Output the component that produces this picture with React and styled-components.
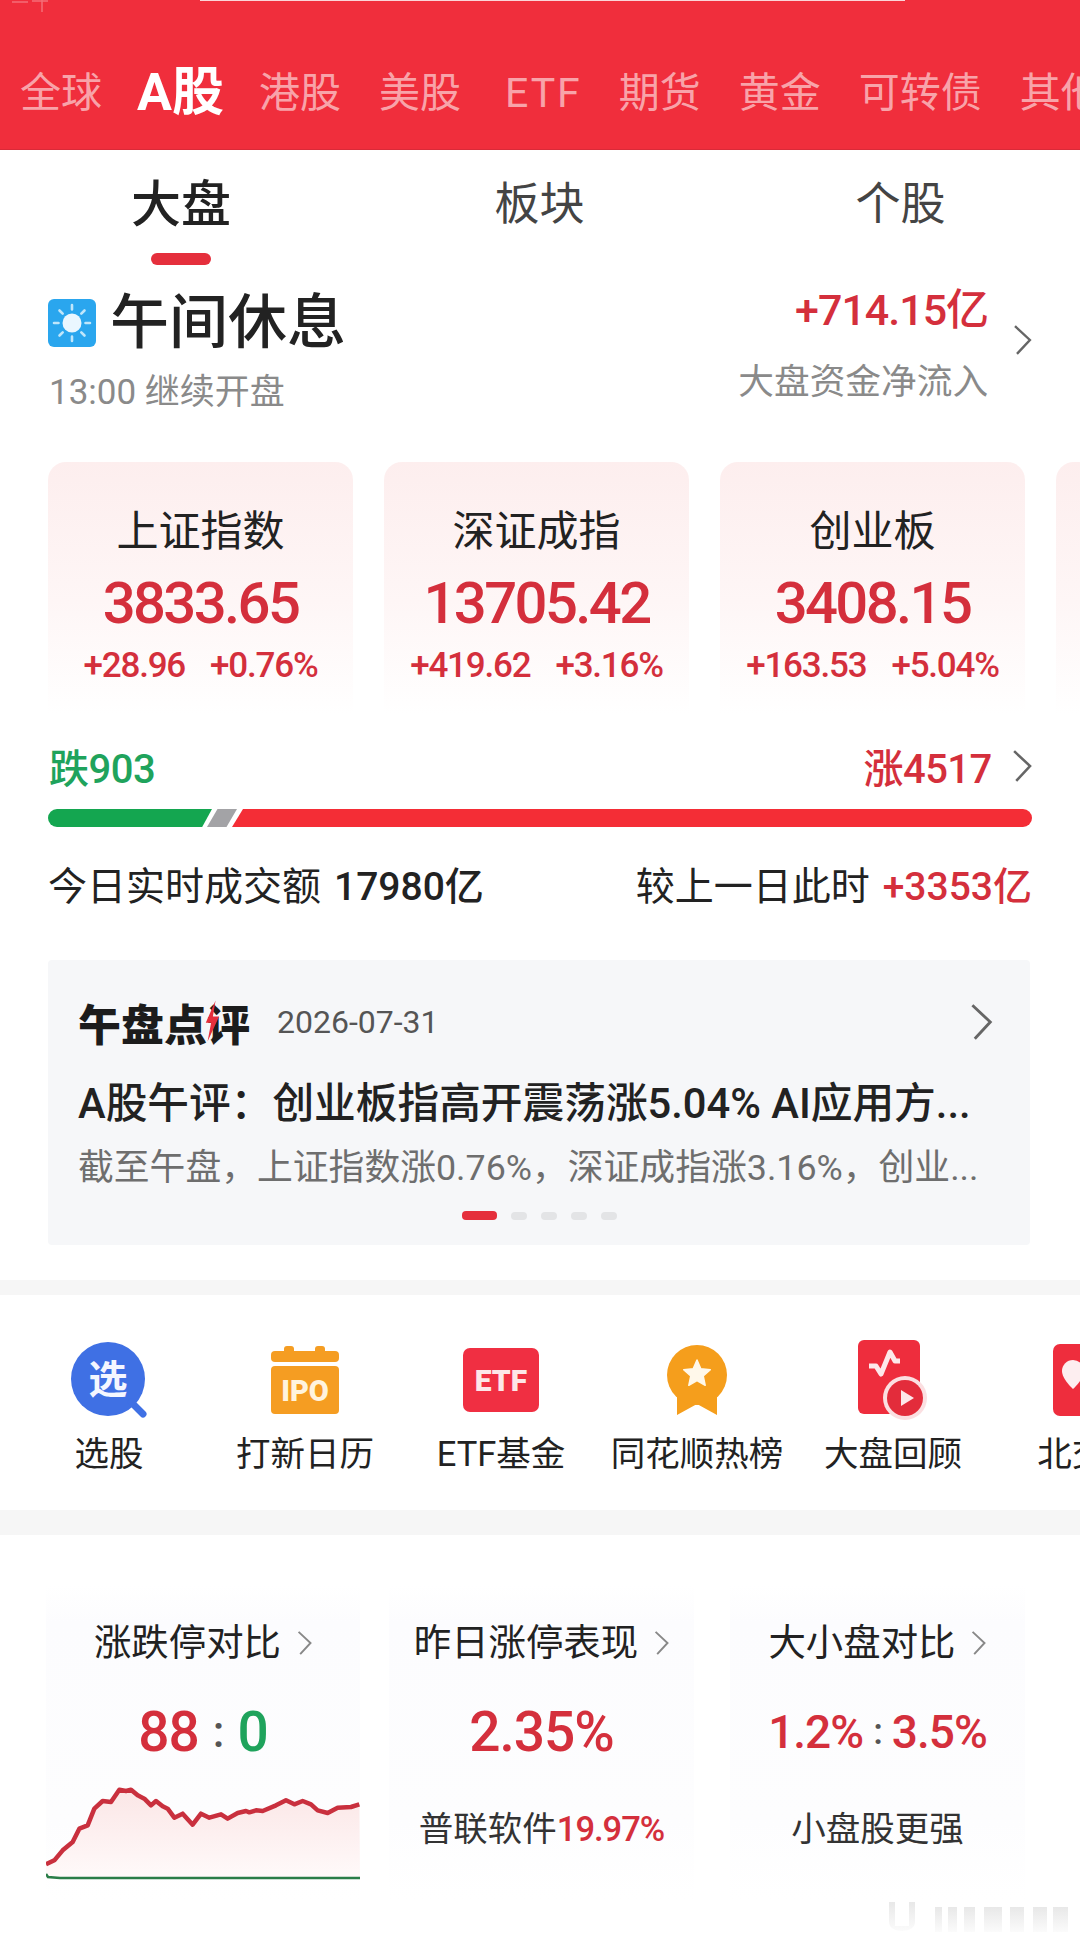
import React from 'react';
import styled, { createGlobalStyle } from 'styled-components';

const GlobalStyle = createGlobalStyle`
  html, body { margin: 0; padding: 0; background: #fff; }
  body { font-family: Roboto, "Noto Sans CJK SC", sans-serif; color: #222; }
`;

const RED = '#d42f3c';
const GREEN = '#1fa35c';

const Page = styled.div`
  width: 1080px;
  height: 1944px;
  overflow: hidden;
  display: flex;
  flex-direction: column;
  background: #fff;
`;

const Header = styled.header`
  height: 150px;
  flex: none;
  background: #f02e3c;
  border-bottom: 1px solid #d92a38;
  box-sizing: border-box;
  position: relative;
  display: flex;
  align-items: flex-end;
`;
const TopLine = styled.div`
  position: absolute;
  top: 0;
  left: 200px;
  width: 705px;
  height: 1px;
  background: #fbd5d8;
`;
const StatusGlyph = styled.svg`
  position: absolute;
  top: 0;
  left: 10px;
`;
const MarketTabs = styled.nav`
  display: flex;
  align-items: center;
  gap: 38px;
  padding: 0 0 26px 20px;
  white-space: nowrap;
  height: 60px;
`;
const MarketTab = styled.span`
  font-size: ${p => (p.$active ? '52px' : '41px')};
  font-weight: ${p => (p.$active ? 700 : 400)};
  color: ${p => (p.$active ? '#fff' : 'rgba(255,255,255,.58)')};
  line-height: 60px;
  letter-spacing: ${p => (p.$latin ? '2px' : '0')};
  margin: ${p => (p.$latin ? '0 -1px 0 6px' : p.$active ? '0 -3px' : '0')};
`;

const SubTabs = styled.div`
  flex: none;
  height: 115px;
  display: grid;
  grid-template-columns: 362px 355px 367px;
`;
const SubTab = styled.div`
  display: flex;
  flex-direction: column;
  align-items: center;
  padding-top: 28px;
  font-size: ${p => (p.$active ? '50px' : '45px')};
  font-weight: ${p => (p.$active ? 500 : 400)};
  line-height: 54px;
  color: ${p => (p.$active ? '#222' : '#444')};
`;
const SubTabMark = styled.i`
  width: 60px;
  height: 12px;
  margin-top: 21px;
  border-radius: 6px;
  background: #e52f3c;
`;

const Status = styled.section`
  flex: none;
  height: 197px;
  box-sizing: border-box;
  padding: 28px 48px 0;
  display: flex;
  justify-content: space-between;
`;
const StatusLeft = styled.div`
  display: flex;
  flex-direction: column;
`;
const StatusTitle = styled.div`
  display: flex;
  align-items: center;
  gap: 14px;
  margin-top: -2px;
  font-size: 59px;
  font-weight: 500;
  line-height: 64px;
  color: #222;
`;
const StatusSub = styled.div`
  font-size: 35px;
  line-height: 44px;
  margin-top: 16px;
  padding-left: 1px;
  color: #8a8a8a;
`;
const StatusRight = styled.div`
  display: flex;
  align-items: flex-start;
  gap: 25px;
`;
const Flow = styled.div`
  display: flex;
  flex-direction: column;
  align-items: flex-end;
  gap: 31px;
  margin-top: -4px;
`;
const FlowValue = styled.div`
  font-size: 43px;
  line-height: 42px;
  font-weight: 500;
  color: ${RED};
  letter-spacing: -1px;
`;
const FlowLabel = styled.div`
  font-size: 35.7px;
  line-height: 40px;
  color: #8a8a8a;
`;
const FlowArrow = styled.div`
  margin-top: 32px;
`;

const Chevron = ({ size = 30, color = '#666' }) => (
  <svg width={size * 0.63} height={size} viewBox="0 0 19 30" fill="none" style={{ flex: 'none' }}>
    <path d="M2 1 L17 15 L4 29" stroke={color} strokeWidth="2.4" fill="none" />
  </svg>
);

const IndexRow = styled.div`
  flex: none;
  display: flex;
  gap: 31px;
  padding-left: 48px;
  height: 253px;
`;
const IndexCard = styled.div`
  flex: none;
  width: 305px;
  border-radius: 18px 18px 0 0;
  background: linear-gradient(180deg, #fdeeee 0%, #fef6f6 55%, #fff 100%);
  display: flex;
  flex-direction: column;
  align-items: center;
  padding-top: 46px;
  box-sizing: border-box;
`;
const IndexName = styled.div`
  font-size: 42px;
  line-height: 48px;
  color: #222;
`;
const IndexValue = styled.div`
  font-size: 58px;
  line-height: 70px;
  margin-top: 12px;
  font-weight: 500;
  color: ${RED};
  letter-spacing: -2.6px;
`;
const IndexChange = styled.div`
  display: flex;
  gap: 25px;
  font-size: 35px;
  font-weight: 500;
  line-height: 38px;
  margin-top: 9px;
  color: ${RED};
  letter-spacing: -1.2px;
`;

const Breadth = styled.div`
  flex: none;
  margin-top: 30px;
  padding: 0 48px;
  height: 42px;
  display: flex;
  align-items: center;
  justify-content: space-between;
  font-size: 40px;
  font-weight: 500;
  letter-spacing: -0.5px;
`;
const Fall = styled.span`
  color: ${GREEN};
  padding-left: 1px;
`;
const Rise = styled.span`
  display: flex;
  align-items: center;
  gap: 20px;
  color: ${RED};
`;
const Bar = styled.div`
  flex: none;
  margin: 22px 48px 0;
  height: 18px;
  display: flex;
  border-radius: 9px;
  overflow: hidden;
`;
const BarPart = styled.i`
  display: block;
  height: 100%;
  background: ${p => p.$color};
  clip-path: ${p => p.$clip};
  flex: ${p => p.$flex};
  margin-left: ${p => p.$ml || 0};
`;
const Turnover = styled.div`
  flex: none;
  margin-top: 33px;
  padding: 0 48px;
  height: 46px;
  display: flex;
  align-items: center;
  justify-content: space-between;
  font-size: 39px;
  color: #222;
`;
const TurnoverPart = styled.span`
  display: flex;
  align-items: center;
  gap: 13px;
`;
const TurnoverNum = styled.span`
  font-weight: 500;
  font-size: 39px;
  color: ${p => (p.$red ? RED : '#222')};
`;

const Review = styled.section`
  flex: none;
  margin: 54px 50px 0 48px;
  height: 285px;
  box-sizing: border-box;
  background: #f6f7f9;
  border-radius: 4px;
  padding: 37px 37px 0 30px;
  display: flex;
  flex-direction: column;
`;
const ReviewHead = styled.div`
  display: flex;
  align-items: center;
  height: 50px;
`;
const ReviewLogo = styled.span`
  font-size: 43px;
  font-weight: 900;
  color: #1c1c1c;
  letter-spacing: 0;
  position: relative;
`;
const Bolt = styled.svg`
  position: absolute;
  right: 30px;
  top: 8px;
`;
const ReviewDate = styled.span`
  font-size: 32px;
  color: #555;
  margin-left: 27px;
  flex: 1;
`;
const ReviewTitle = styled.div`
  margin-top: 33px;
  font-size: 41.7px;
  line-height: 48px;
  font-weight: 500;
  color: #222;
  white-space: nowrap;
`;
const ReviewText = styled.div`
  margin-top: 17px;
  font-size: 35.8px;
  line-height: 46px;
  color: #6e6e6e;
  white-space: nowrap;
`;
const Dots = styled.div`
  display: flex;
  justify-content: center;
  align-items: center;
  gap: 14px;
  margin-top: 20px;
  padding-left: 8px;
`;
const Dot = styled.i`
  width: ${p => (p.$active ? '35px' : '16px')};
  height: ${p => (p.$active ? '9px' : '8px')};
  border-radius: 4px;
  background: ${p => (p.$active ? '#e52f3c' : '#e3e4e6')};
`;

const Band = styled.div`
  flex: none;
  height: ${p => p.$h}px;
  margin-top: ${p => p.$mt || 0}px;
  background: #f6f6f6;
`;
const Rounded = styled.section`
  flex: none;
  position: relative;
  background: #fff;
  overflow: hidden;
  height: ${p => p.$h}px;
`;
const Shortcuts = styled.div`
  display: flex;
  height: 100%;
  box-sizing: border-box;
  padding: 45px 0 0 11px;
  white-space: nowrap;
`;
const Shortcut = styled.div`
  flex: none;
  width: 196px;
  display: flex;
  flex-direction: column;
  align-items: center;
  font-size: 34.5px;
  line-height: 42px;
  color: #222;
`;
const ShortcutIcon = styled.div`
  height: 80px;
  display: flex;
  align-items: center;
  justify-content: center;
  margin-bottom: 13px;
`;

const Tiles = styled.div`
  display: flex;
  padding: 50px 0 0 46px;
`;
const Tile = styled.div`
  flex: none;
  width: ${p => p.$w}px;
  margin-right: ${p => p.$mr}px;
  height: 315px;
  display: flex;
  flex-direction: column;
  align-items: center;
  background: linear-gradient(180deg, #fff, #fcfcfe 12%, #fdfdfe 75%, #fff);
  padding-top: 38px;
  box-sizing: border-box;
`;
const TileHead = styled.div`
  display: flex;
  align-items: center;
  gap: 16px;
  font-size: 37.4px;
  line-height: 40px;
  color: #222;
`;
const TileValue = styled.div`
  font-size: ${p => p.$size || 55}px;
  line-height: 60px;
  margin-top: 39px;
  font-weight: 500;
  color: ${RED};
  display: flex;
  gap: ${p => p.$gap || 0}px;
  align-items: center;
  letter-spacing: -1px;
`;
const Colon = styled.span`
  color: #555;
  font-size: 0.8em;
`;
const Zero = styled.span`
  color: ${GREEN};
`;
const TileNote = styled.div`
  margin-top: 47px;
  font-size: 34.5px;
  line-height: 40px;
  color: #333;
`;
const NoteRed = styled.span`
  color: ${RED};
  font-weight: 500;
  letter-spacing: -1px;
`;
const ChartSvg = styled.svg`
  margin-top: 25px;
  align-self: flex-start;
`;
const Watermark = styled.svg`
  position: absolute;
  right: 10px;
  bottom: 12px;
`;

const markets = ['全球', 'A股', '港股', '美股', 'ETF', '期货', '黄金', '可转债', '其他'];

const indexes = [
  { name: '上证指数', value: '3833.65', diff: '+28.96', pct: '+0.76%' },
  { name: '深证成指', value: '13705.42', diff: '+419.62', pct: '+3.16%' },
  { name: '创业板', value: '3408.15', diff: '+163.53', pct: '+5.04%' },
  { name: '', value: '', diff: '', pct: '' },
];

const SunIcon = () => (
  <svg width="48" height="48" viewBox="0 0 48 48">
    <rect width="48" height="48" rx="6" fill="#2aa6ee" />
    <circle cx="24" cy="24" r="9.500" fill="#eaf7ff" />
    <g stroke="#bfe6fb" strokeWidth="2.6" strokeLinecap="round">
      <path d="M24 6v4.500M24 37.500V42M6 24h4.500M37.500 24H42M11.500 11.500l3.200 3.200M33.300 33.300l3.200 3.200M11.500 36.500l3.200-3.200M33.300 14.700l3.200-3.200" />
    </g>
  </svg>
);

const PickIcon = () => (
  <svg width="76" height="76" viewBox="0 0 76 76">
    <circle cx="37" cy="37" r="37" fill="#3f70e4" />
    <path d="M60 60l12 12" stroke="#3f70e4" strokeWidth="7" strokeLinecap="round" />
    <text x="37" y="51" fontSize="39" fontWeight="700" fill="#f4f7ff" textAnchor="middle" fontFamily="Noto Sans CJK SC">选</text>
  </svg>
);

const IpoIcon = () => (
  <svg width="68" height="68" viewBox="0 0 68 68">
    <rect x="13" y="0" width="10" height="10" rx="3" fill="#f59d22" />
    <rect x="44" y="0" width="10" height="10" rx="3" fill="#f59d22" />
    <rect x="0" y="5" width="68" height="11" rx="4" fill="#f59d22" />
    <rect x="0" y="20" width="68" height="48" rx="4" fill="#f59d22" />
    <text x="34" y="55" fontSize="29" fontWeight="900" fill="#fff3dd" textAnchor="middle" fontFamily="Roboto">IPO</text>
  </svg>
);

const EtfIcon = () => (
  <svg width="76" height="64" viewBox="0 0 76 64">
    <rect width="76" height="64" rx="7" fill="#f02f42" />
    <text x="38" y="43" fontSize="30" fontWeight="900" fill="#fde6e8" textAnchor="middle" fontFamily="Roboto">ETF</text>
  </svg>
);

const MedalIcon = () => (
  <svg width="62" height="72" viewBox="0 0 62 72">
    <path d="M11 44L11 71L31 60L51 71L51 44Z" fill="#f59e1c" />
    <circle cx="31" cy="31" r="30" fill="#f59e1c" />
    <path
      d="M31 16L34.800 24.700L44.300 25.700L37.200 32L39.200 41.300L31 36.500L22.800 41.300L24.800 32L17.700 25.700L27.200 24.700Z"
      fill="#fff8ea"
      stroke="#fff8ea"
      strokeWidth="1.500"
      strokeLinejoin="round"
    />
  </svg>
);

const ReplayIcon = () => (
  <svg width="70" height="81" viewBox="0 0 70 81">
    <rect x="0" y="0" width="62" height="74" rx="6" fill="#ee2d3d" />
    <path d="M11 26h7l5 8 9-22 5 9h5" fill="none" stroke="#fde8ea" strokeWidth="5" strokeLinejoin="round" />
    <circle cx="47" cy="58" r="22" fill="#fbdfe1" />
    <circle cx="47" cy="58" r="18" fill="#e32c3b" />
    <path d="M43 50l13 8-13 8z" fill="#fde8ea" />
  </svg>
);

const BeijingIcon = () => (
  <svg width="72" height="72" viewBox="0 0 72 72">
    <rect width="72" height="72" rx="7" fill="#ee2d3d" />
    <path d="M9 27a11 11 0 1 1 22 0c0 8-11 18-11 18S9 35 9 27z" fill="#fdeef0" />
  </svg>
);

const shortcuts = [
  { label: '选股', icon: <PickIcon /> },
  { label: '打新日历', icon: <IpoIcon /> },
  { label: 'ETF基金', icon: <EtfIcon /> },
  { label: '同花顺热榜', icon: <MedalIcon /> },
  { label: '大盘回顾', icon: <ReplayIcon /> },
  { label: '北交所', icon: <BeijingIcon /> },
];

const redLine = [[50,372],[75,360],[100,330],[130,305],[150,265],[175,255],[195,205],[220,182],[245,185],[270,148],[290,152],[305,148],[325,165],[345,175],[365,195],[380,182],[400,198],[415,205],[435,232],[460,220],[490,253],[515,220],[540,232],[575,222],[595,235],[625,218],[650,212],[660,216],[680,210],[700,212],[740,195],[770,180],[795,192],[820,182],[845,192],[865,210],[895,218],[925,202],[965,200],[990,192]];

const toPoints = pts => pts.map(([x, y]) => `${(x - 50) / 3},${(y - 140) / 3}`).join(' ');

const LimitChart = () => (
  <ChartSvg width="314" height="96" viewBox="0 0 314 96">
    <defs>
      <linearGradient id="fade" x1="0" y1="0" x2="0" y2="1">
        <stop offset="0" stopColor="#fbe6e6" />
        <stop offset="1" stopColor="#fffafa" />
      </linearGradient>
    </defs>
    <polygon points={`0,92 ${toPoints(redLine)} 314,92`} fill="url(#fade)" />
    <polyline points={toPoints(redLine)} fill="none" stroke="#c9303e" strokeWidth="4.500" strokeLinejoin="round" />
    <polyline points="0,87 2,90 14,91 314,91" fill="none" stroke="#2a7d48" strokeWidth="2.500" />
  </ChartSvg>
);

const App = () => (
  <Page>
    <GlobalStyle />
    <Header>
      <TopLine />
      <StatusGlyph width="42" height="13" viewBox="0 0 42 13">
        <path d="M2 2h16M22 1h16M32 0v12" stroke="rgba(255,255,255,.3)" strokeWidth="1.500" fill="none" />
      </StatusGlyph>
      <MarketTabs>
        {markets.map(m => (
          <MarketTab key={m} $active={m === 'A股'} $latin={m === 'ETF'}>{m}</MarketTab>
        ))}
      </MarketTabs>
    </Header>

    <SubTabs>
      <SubTab $active>大盘<SubTabMark /></SubTab>
      <SubTab>板块</SubTab>
      <SubTab>个股</SubTab>
    </SubTabs>

    <Status>
      <StatusLeft>
        <StatusTitle><SunIcon />午间休息</StatusTitle>
        <StatusSub>13:00 继续开盘</StatusSub>
      </StatusLeft>
      <StatusRight>
        <Flow>
          <FlowValue>+714.15亿</FlowValue>
          <FlowLabel>大盘资金净流入</FlowLabel>
        </Flow>
        <FlowArrow><Chevron /></FlowArrow>
      </StatusRight>
    </Status>

    <IndexRow>
      {indexes.map((x, i) => (
        <IndexCard key={i}>
          <IndexName>{x.name}</IndexName>
          <IndexValue>{x.value}</IndexValue>
          <IndexChange><span>{x.diff}</span><span>{x.pct}</span></IndexChange>
        </IndexCard>
      ))}
    </IndexRow>

    <Breadth>
      <Fall>跌903</Fall>
      <Rise>涨4517<Chevron size={32} /></Rise>
    </Breadth>
    <Bar>
      <BarPart $color="#14a650" $flex="0 0 164px" $clip="polygon(0 0,100% 0,94% 100%,0 100%)" />
      <BarPart $color="#a3a3a6" $flex="0 0 30px" $ml="-5px" $clip="polygon(35% 0,100% 0,65% 100%,0 100%)" />
      <BarPart $color="#f42d36" $flex="1" $ml="-5px" $clip="polygon(11px 0,100% 0,100% 100%,0 100%)" />
    </Bar>
    <Turnover>
      <TurnoverPart>今日实时成交额<TurnoverNum>17980亿</TurnoverNum></TurnoverPart>
      <TurnoverPart>较上一日此时<TurnoverNum $red>+3353亿</TurnoverNum></TurnoverPart>
    </Turnover>

    <Review>
      <ReviewHead>
        <ReviewLogo>
          午盘点评
          <Bolt width="16" height="44" viewBox="0 0 18 46">
            <path d="M13 0L2 25h6L4 46 17 18h-7z" fill="#e52f3c" />
          </Bolt>
        </ReviewLogo>
        <ReviewDate>2026-07-31</ReviewDate>
        <Chevron size={36} />
      </ReviewHead>
      <ReviewTitle>A股午评：创业板指高开震荡涨5.04% AI应用方...</ReviewTitle>
      <ReviewText>截至午盘，上证指数涨0.76%，深证成指涨3.16%，创业...</ReviewText>
      <Dots>
        <Dot $active /><Dot /><Dot /><Dot /><Dot />
      </Dots>
    </Review>

    <Band $h={15} $mt={35} />
    <Rounded $h={215}>
      <Shortcuts>
        {shortcuts.map(s => (
          <Shortcut key={s.label}>
            <ShortcutIcon>{s.icon}</ShortcutIcon>
            {s.label}
          </Shortcut>
        ))}
      </Shortcuts>
    </Rounded>
    <Band $h={25} />
    <Rounded $h={409}>
      <Tiles>
        <Tile $w={314} $mr={29}>
          <TileHead>涨跌停对比<Chevron size={24} color="#888" /></TileHead>
          <TileValue $gap={14}>88<Colon>:</Colon><Zero>0</Zero></TileValue>
          <LimitChart />
        </Tile>
        <Tile $w={305} $mr={36}>
          <TileHead>昨日涨停表现<Chevron size={24} color="#888" /></TileHead>
          <TileValue>2.35%</TileValue>
          <TileNote>普联软件<NoteRed>19.97%</NoteRed></TileNote>
        </Tile>
        <Tile $w={295} $mr={0}>
          <TileHead>大小盘对比<Chevron size={24} color="#888" /></TileHead>
          <TileValue $size={46} $gap={10}>1.2%<Colon>:</Colon>3.5%</TileValue>
          <TileNote>小盘股更强</TileNote>
        </Tile>
      </Tiles>
      <Watermark width="182" height="32" viewBox="0 0 182 32">
        <defs>
          <linearGradient id="wm" x1="0" y1="0" x2="0" y2="1">
            <stop offset="0" stopColor="#e8e8e8" />
            <stop offset="1" stopColor="#fbfbfb" />
          </linearGradient>
        </defs>
        <path d="M1 2v20c0 12 26 12 26 0V2h-6v24H7V2z" fill="url(#wm)" />
        <rect x="47" y="7" width="7" height="25" fill="url(#wm)" />
        <rect x="60" y="7" width="9" height="25" fill="url(#wm)" />
        <rect x="76" y="7" width="11" height="25" fill="url(#wm)" />
        <rect x="96" y="7" width="18" height="25" fill="url(#wm)" />
        <rect x="122" y="7" width="14" height="25" fill="url(#wm)" />
        <rect x="145" y="7" width="14" height="25" fill="url(#wm)" />
        <rect x="165" y="7" width="15" height="25" fill="url(#wm)" />
      </Watermark>
    </Rounded>
  </Page>
);

export default App;
